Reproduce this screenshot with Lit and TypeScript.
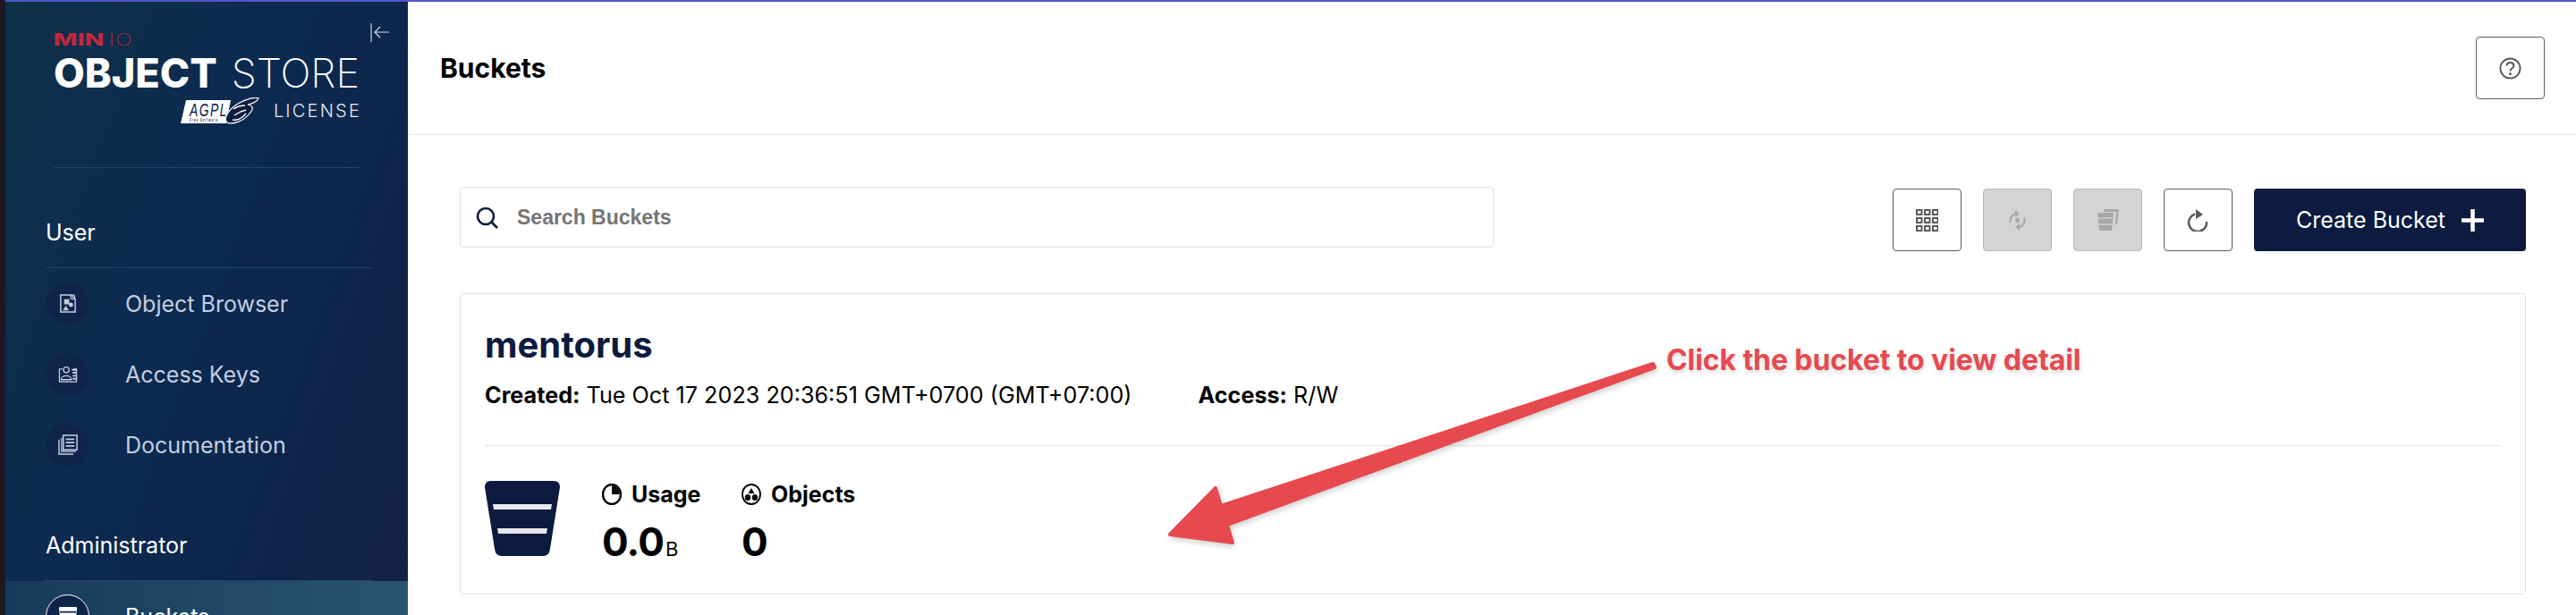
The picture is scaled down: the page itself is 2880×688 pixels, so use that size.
import { LitElement, html, css, svg } from "lit"
import { customElement } from "lit/decorators.js"

const navy = "#0c1b3f"
const navyCss = css`#0c1b3f`

const icons = {
   objectBrowser: svg`<path d="M3 2h12l5 5v15H3z" fill="none" stroke="currentColor" stroke-width="1.5"/><circle cx="17" cy="4.500" r="2.500" fill="none" stroke="currentColor" stroke-width="1.200"/><rect x="7" y="7" width="6" height="6" fill="currentColor"/><circle cx="15" cy="13.500" r="2.600" fill="currentColor"/><path d="M9 14.500l3.500 5.500H5.500z" fill="currentColor"/>`,
   accessKeys: svg`<path d="M5 6H1.500v15h20V6H18" fill="none" stroke="currentColor" stroke-width="1.300"/><circle cx="9.500" cy="7" r="3.300" fill="none" stroke="currentColor" stroke-width="1.400"/><path d="M3.500 18.500c0-6 12-6 12 0z" fill="none" stroke="currentColor" stroke-width="1.400"/><path d="M16 7h5M17 10.500h4M17 14h4M17 17.500h4" stroke="currentColor" stroke-width="2"/>`,
   documentation: svg`<path d="M1 6v17h17" fill="none" stroke="currentColor" stroke-width="1.500"/><path d="M4 4v16h17" fill="none" stroke="currentColor" stroke-width="1.300"/><rect x="6" y="1" width="16" height="17" fill="none" stroke="currentColor" stroke-width="1.600"/><path d="M9 5.500h10M9 9.500h10M9 13.500h10" stroke="currentColor" stroke-width="1.800"/>`,
   buckets: svg`<path d="M1 2.500Q1 1 2.500 1h18Q22 1 22 2.500l-1.800 19q-.2 1.500-1.700 1.500h-14q-1.500 0-1.700-1.500z" fill="currentColor"/><path d="M2 7h19M3 15h17" stroke="#0f2449" stroke-width="1.800"/>`,
}

const navIcon = (body: unknown) => html`<svg class="nav-icon" viewBox="0 0 23 24">${body}</svg>`

const gridDots = [0, 1, 2].flatMap((row) =>
   [0, 1, 2].map((col) => svg`<rect x=${1 + col * 9} y=${1 + row * 9} width="5.500" height="5" fill="none" stroke="currentColor" stroke-width="2"/>`)
)

@customElement("app-root")
export class AppRoot extends LitElement {
   renderBrand() {
      return html`
         <div class="brand">
            <div class="minio"><b>MIN</b><span>IO</span></div>
            <div class="wordmark"><b>OBJECT</b><span>STORE</span></div>
            <div class="license">
               <svg class="agpl" viewBox="0 0 88 30">
                  <path d="M6 3H56L51 29H0z" fill="#fff"/>
                  <text x="10" y="21" font-family="Liberation Sans, sans-serif" font-size="20" font-style="italic" fill="${navy}" textLength="43" lengthAdjust="spacingAndGlyphs">AGPL</text>
                  <text x="10" y="27" font-family="Liberation Sans, sans-serif" font-size="5" font-style="italic" font-weight="700" fill="${navy}" textLength="32" lengthAdjust="spacingAndGlyphs">Free Software</text>
                  <path d="M52 28C47 24 54 13 64 7 72 2 84-1 87 1 85 5 80 7 75 8 81 9 82 13 77 18 71 26 58 31 52 28z" fill="${navy}" stroke="#fff" stroke-width="1.200"/>
                  <path d="M59 13c4-3 8-4 13-4M60 20c4-3 8-5 13-6M58 25c5 1 11-2 15-7" fill="none" stroke="#fff" stroke-width="1.500"/>
               </svg>
               <span>LICENSE</span>
            </div>
         </div>
         <svg class="collapse" viewBox="0 0 21 21">
            <path d="M1 0v21M21 10H5M11 4l-6 6 6 6" fill="none" stroke="#dfe5ee" stroke-width="1.100"/>
         </svg>
      `
   }

   renderNavItem(label: string, icon: unknown, active = false) {
      return html`
         <div class="nav-item ${active ? "active" : ""}">
            <span class="nav-circle">${navIcon(icon)}</span>
            <span>${label}</span>
         </div>
      `
   }

   renderToolbar() {
      return html`
         <div class="toolbar">
            <label class="search">
               <svg viewBox="0 0 25 25"><circle cx="11" cy="11" r="9" fill="none" stroke="${navy}" stroke-width="2.600"/><path d="M17 17l7 7" stroke="${navy}" stroke-width="2.600"/></svg>
               <span>Search Buckets</span>
            </label>
            <div class="actions">
               <button class="icon-btn"><svg viewBox="0 0 25 25">${gridDots}</svg></button>
               <button class="icon-btn disabled">
                  <svg viewBox="0 0 25 25">
                     <path d="M5 15C3 11 6 7 10 5M20 10c2 4-1 8-5 10" fill="none" stroke="currentColor" stroke-width="2.200"/>
                     <path d="M10 1l5 4-5 4zM15 24l-5-4 5-4z" fill="currentColor"/>
                     <circle cx="12.500" cy="12.500" r="2.500" fill="currentColor"/>
                  </svg>
               </button>
               <button class="icon-btn disabled">
                  <svg viewBox="0 0 25 25">
                     <path d="M8 0h17l-2 17h-2L22 3H8z" fill="currentColor"/>
                     <path d="M1 5q0-1 1-1h16q1 0 1 1l-2 18q0 1-1 1H4q-1 0-1-1z" fill="currentColor"/>
                     <path d="M2 10h16M3 17h14" stroke="#d3d5d5" stroke-width="1.500"/>
                  </svg>
               </button>
               <button class="icon-btn">
                  <svg viewBox="0 0 25 25">
                     <path d="M9 5.500A10 10 0 1 0 22 14" fill="none" stroke="currentColor" stroke-width="2.500"/>
                     <path d="M10 0l8 6-8 5z" fill="currentColor"/>
                  </svg>
               </button>
               <button class="create">
                  <span>Create Bucket</span>
                  <svg viewBox="0 0 25 25"><path d="M12.500 0v25M0 12.500h25" stroke="#fff" stroke-width="4.500"/></svg>
               </button>
            </div>
         </div>
      `
   }

   renderCard() {
      return html`
         <section class="card">
            <h2>mentorus</h2>
            <div class="meta">
               <span><b>Created:</b> Tue Oct 17 2023 20:36:51 GMT+0700 (GMT+07:00)</span>
               <span><b>Access:</b> R/W</span>
            </div>
            <div class="stats">
               <svg class="bucket" viewBox="0 0 84 84">
                  <path d="M0 7Q0 0 7 0H77Q84 0 84 7L73 76Q72 84 65 84H19Q12 84 11 76Z" fill="${navy}"/>
                  <path d="M9 26H75L74 32H10ZM14 53H70L69 59H15Z" fill="#e8e8ee"/>
               </svg>
               <div class="stat">
                  <div class="stat-label">
                     <svg viewBox="0 0 22 24"><ellipse cx="11" cy="12" rx="10" ry="11" fill="none" stroke="#000" stroke-width="2.400"/><path d="M11 2a10 10 0 0 1 9 10h-9z" fill="#000"/></svg>
                     Usage
                  </div>
                  <div class="stat-value">0.0<small>B</small></div>
               </div>
               <div class="stat">
                  <div class="stat-label">
                     <svg viewBox="0 0 22 24"><ellipse cx="11" cy="12" rx="10" ry="11" fill="none" stroke="#000" stroke-width="1.800"/><path d="M11 5l3.500 6h-7z" fill="#000"/><ellipse cx="7" cy="15.500" rx="3.200" ry="3.500" fill="#000"/><ellipse cx="15" cy="15.500" rx="3.200" ry="3.500" fill="#000"/></svg>
                     Objects
                  </div>
                  <div class="stat-value">0</div>
               </div>
            </div>
         </section>
      `
   }

   render() {
      return html`
         <div class="strip"></div>
         <div class="frame">
            <div class="accent"></div>
            <div class="body">
               <aside class="sidebar">
                  <div class="head">${this.renderBrand()}</div>
                  <div class="brand-rule"></div>
                  <div class="nav-title user-title">User</div>
                  ${this.renderNavItem("Object Browser", icons.objectBrowser)}
                  ${this.renderNavItem("Access Keys", icons.accessKeys)}
                  ${this.renderNavItem("Documentation", icons.documentation)}
                  <div class="nav-title admin-title">Administrator</div>
                  ${this.renderNavItem("Buckets", icons.buckets, true)}
               </aside>
               <main class="main">
                  <header class="page-head">
                     <h1>Buckets</h1>
                     <button class="icon-btn help">
                        <svg viewBox="0 0 26 26">
                           <circle cx="13" cy="13" r="11.500" fill="none" stroke="currentColor" stroke-width="2"/>
                           <path d="M9 10c0-5 8-5 8 0 0 3-4 3-4 6" fill="none" stroke="currentColor" stroke-width="2.200"/>
                           <circle cx="13" cy="19.500" r="1.500" fill="currentColor"/>
                        </svg>
                     </button>
                  </header>
                  <div class="content">
                     ${this.renderToolbar()}
                     ${this.renderCard()}
                  </div>
               </main>
            </div>
         </div>
         <svg class="arrow" viewBox="0 0 560 215">
            <path d="M548 7L65 166 59 146 8 198 78 207 72 187 550 11Z" fill="#e64a4f" stroke="#e64a4f" stroke-width="4" stroke-linejoin="round"/>
         </svg>
         <div class="note">Click the bucket to view detail</div>
      `
   }

   static styles = css`
      :host {
         display: flex;
         position: relative;
         width: 2880px;
         height: 688px;
         overflow: hidden;
         background: #fff;
         font-family: Inter, "Liberation Sans", sans-serif;
         color: #000;
      }
      .strip {
         width: 6px;
         flex: none;
         background: #1b1a24;
      }
      .frame {
         flex: 1;
         min-width: 0;
         display: flex;
         flex-direction: column;
      }
      .accent {
         height: 2px;
         flex: none;
         background: #5158c9;
      }
      .body {
         flex: 1;
         min-height: 0;
         display: flex;
      }

      .sidebar {
         width: 450px;
         flex: none;
         overflow: hidden;
         background: linear-gradient(110deg, #0f3149 0%, #0c2a50 45%, #111f45 100%);
         color: #fff;
      }
      .head {
         display: flex;
         padding: 0 21px 0 54px;
         justify-content: space-between;
         align-items: flex-start;
      }
      .brand {
         width: 342px;
         padding-top: 31px;
         display: flex;
         flex-direction: column;
      }
      .minio {
         height: 24px;
         line-height: 24px;
         font-size: 19px;
         color: #c1283e;
         display: flex;
      }
      .minio b {
         width: 62px;
         font-weight: 800;
         transform: scaleX(1.5);
         transform-origin: left;
      }
      .minio span {
         font-weight: 200;
         letter-spacing: 1px;
         transform: scaleX(1.3);
         transform-origin: left;
      }
      .wordmark {
         margin-top: -2px;
         height: 54px;
         line-height: 54px;
         font-size: 45px;
         display: flex;
         justify-content: space-between;
      }
      .wordmark b {
         font-weight: 800;
      }
      .wordmark span {
         font-weight: 200;
      }
      .license {
         margin-top: 1px;
         height: 28px;
         display: flex;
         align-items: center;
         justify-content: flex-end;
         gap: 16px;
         font-size: 20px;
         font-weight: 300;
         letter-spacing: 2.2px;
         color: #e8ecf2;
      }
      .license span {
         margin-right: -2px;
      }
      .agpl {
         width: 88px;
         height: 30px;
      }
      .collapse {
         width: 21px;
         height: 21px;
         margin-top: 24px;
      }
      .brand-rule {
         height: 1px;
         margin: 49px 54px 0;
         background: #1f4566;
      }
      .nav-title {
         margin: 0 39px 0 45px;
         padding-bottom: 24px;
         height: 30px;
         line-height: 30px;
         font-size: 25px;
         border-bottom: 1px solid #1f4566;
      }
      .user-title {
         margin-top: 57px;
      }
      .admin-title {
         margin-top: 58px;
      }
      .nav-item {
         height: 79px;
         padding-left: 45px;
         display: flex;
         align-items: center;
         gap: 40px;
         font-size: 25px;
         color: #c3cfe0;
      }
      .nav-item.active {
         background: linear-gradient(90deg, #173a5a, #2a5472);
         color: #fff;
      }
      .nav-circle {
         width: 49px;
         height: 49px;
         box-sizing: border-box;
         border-radius: 50%;
         display: flex;
         align-items: center;
         justify-content: center;
         background: #0f2449;
         border: 1px solid #122a4e;
      }
      .nav-item.active .nav-circle {
         border: 1px solid #fff;
      }
      .nav-icon {
         width: 22px;
         height: 23px;
      }

      .main {
         flex: 1;
         min-width: 0;
      }
      .page-head {
         height: 149px;
         box-sizing: border-box;
         border-bottom: 1px solid #e5e5e5;
         padding: 0 35px 0 36px;
         display: flex;
         align-items: center;
         justify-content: space-between;
      }
      h1 {
         margin: 0;
         font-size: 30px;
         font-weight: 700;
         color: #000;
      }
      .icon-btn {
         width: 77px;
         height: 70px;
         padding: 0;
         display: flex;
         align-items: center;
         justify-content: center;
         background: #fff;
         border: 1px solid #5a5a5a;
         border-radius: 4px;
         color: #5a5a5a;
      }
      .icon-btn svg {
         width: 25px;
         height: 25px;
      }
      .icon-btn.disabled {
         background: #d3d5d5;
         border-color: #b8baba;
         color: #a6a8a8;
      }
      .content {
         padding: 58px 56px 0 58px;
      }
      .toolbar {
         display: flex;
         justify-content: space-between;
         align-items: flex-start;
      }
      .search {
         width: 1156px;
         height: 68px;
         box-sizing: border-box;
         border: 1px solid #e2e2e2;
         border-radius: 4px;
         padding-left: 17px;
         display: flex;
         align-items: center;
         gap: 21px;
         font-family: "Liberation Sans", sans-serif;
         font-weight: 700;
         font-size: 23px;
         color: #757575;
      }
      .search svg {
         width: 25px;
         height: 25px;
      }
      .actions {
         margin-top: 2px;
         display: flex;
         gap: 24px;
      }
      .create {
         width: 304px;
         height: 70px;
         padding: 0 0 0 47px;
         display: flex;
         align-items: center;
         gap: 18px;
         border: none;
         border-radius: 4px;
         background: ${navyCss};
         color: #fff;
         font-family: inherit;
         font-size: 25px;
         font-weight: 400;
      }
      .create svg {
         width: 25px;
         height: 25px;
      }

      .card {
         margin-top: 47px;
         height: 337px;
         box-sizing: border-box;
         padding: 34px 26px 0 27px;
         border: 1px solid #e2e2e2;
         border-radius: 4px;
      }
      h2 {
         margin: 0;
         height: 46px;
         line-height: 46px;
         font-size: 40px;
         font-weight: 700;
         color: ${navyCss};
      }
      .meta {
         margin-top: 18px;
         padding-bottom: 41px;
         height: 30px;
         line-height: 30px;
         display: flex;
         gap: 74px;
         font-size: 25.2px;
         border-bottom: 1px solid #e5e5e5;
      }
      .stats {
         margin-top: 39px;
         display: flex;
      }
      .bucket {
         width: 84px;
         height: 84px;
         margin-right: 47px;
      }
      .stat {
         width: 156px;
      }
      .stat-label {
         height: 30px;
         line-height: 30px;
         display: flex;
         align-items: center;
         gap: 11px;
         font-size: 25px;
         font-weight: 700;
      }
      .stat-label svg {
         width: 22px;
         height: 24px;
      }
      .stat-value {
         margin-top: 16px;
         height: 44px;
         line-height: 44px;
         font-size: 44px;
         font-weight: 700;
         letter-spacing: -0.8px;
      }
      .stat-value small {
         font-size: 22px;
         font-weight: 400;
         margin-left: 2px;
      }

      .arrow {
         position: absolute;
         left: 1300px;
         top: 400px;
         width: 560px;
         height: 215px;
         filter: drop-shadow(1px 3px 3px rgba(0, 0, 0, 0.18));
      }
      .note {
         position: absolute;
         left: 1863px;
         top: 384px;
         line-height: 38px;
         font-size: 32px;
         font-weight: 700;
         letter-spacing: -0.1px;
         color: #e64a4f;
         text-shadow: 1px 3px 4px rgba(0, 0, 0, 0.15);
         white-space: nowrap;
      }
   `
}

declare global {
   interface HTMLElementTagNameMap {
      "app-root": AppRoot
   }
}
